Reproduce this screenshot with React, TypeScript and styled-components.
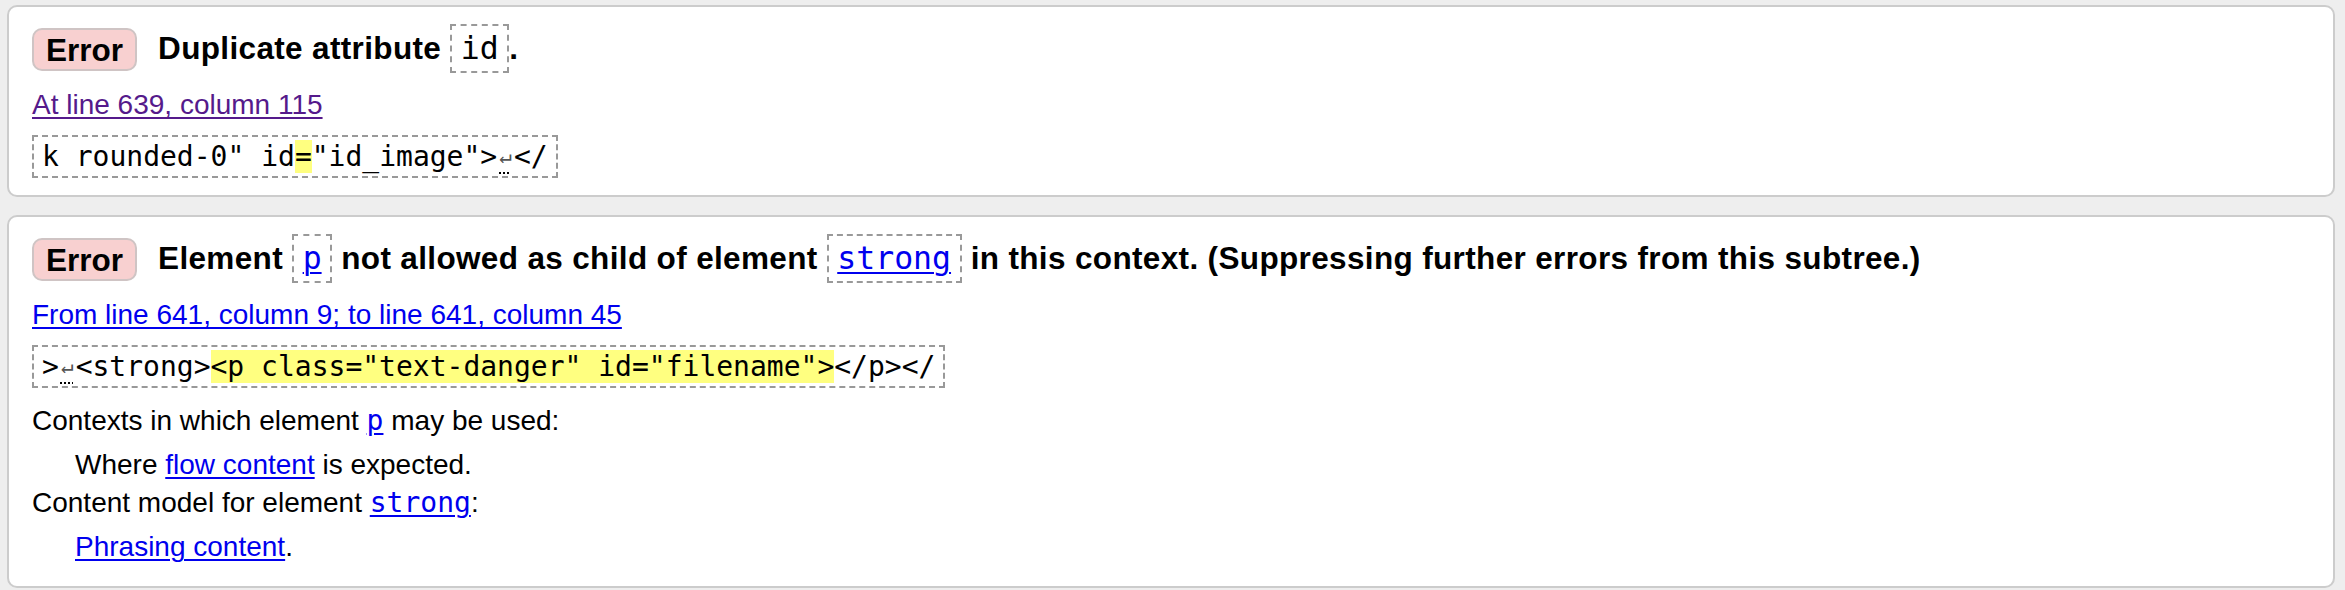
import React from "react"
import styled, { createGlobalStyle } from "styled-components"

const GlobalStyle = createGlobalStyle`
  html, body {
    margin: 0;
    padding: 0;
    background: #eeeeee;
  }
  body {
    font-family: "Liberation Sans", Arial, sans-serif;
    font-size: 28px;
    line-height: 38px;
    color: #000;
  }
`

const Page = styled.div`
  padding: 5px 10px 6px 7px;
`

const Card = styled.section`
  background: #fff;
  border: 2px solid #cccccc;
  border-radius: 10px;
  padding: 17px 23px 17px 23px;
  & + & {
    margin-top: 18px;
  }
`

const HeadingRow = styled.div`
  display: flex;
  align-items: center;
  gap: 21px;
`

const Badge = styled.span`
  display: inline-flex;
  align-items: center;
  height: 43px;
  box-sizing: border-box;
  padding: 0 12px;
  background: #f8d0d0;
  border: 2px solid #cfc4c4;
  border-radius: 10px;
  font-weight: bold;
  font-size: 31.5px;
`

const Title = styled.h2`
  margin: 0;
  font-size: 31.5px;
  font-weight: bold;
  line-height: 49px;
  letter-spacing: 0.35px;
`

const InlineCode = styled.code`
  display: inline-block;
  vertical-align: middle;
  box-sizing: border-box;
  height: 49px;
  padding: 0 8.5px;
  border: 2px dashed #999999;
  font-family: "DejaVu Sans Mono", "Liberation Mono", monospace;
  font-size: 31.5px;
  font-weight: normal;
  letter-spacing: 0;
  line-height: 45px;
  position: relative;
  top: -2px;
`

const Link = styled.a<{ $visited?: boolean }>`
  color: ${({ $visited }) => ($visited ? "#551a8b" : "#0000ee")};
  text-decoration: underline;
  text-decoration-thickness: 2px;
  text-underline-offset: 3px;
`

const Location = styled.div`
  margin-top: 11px;
  line-height: 38px;
`

const Extract = styled.div`
  display: inline-block;
  margin-top: 11px;
  box-sizing: border-box;
  height: 43px;
  padding: 0 8px;
  border: 2px dashed #999999;
  font-family: "DejaVu Sans Mono", "Liberation Mono", monospace;
  font-size: 28px;
  line-height: 39px;
  white-space: pre;
`

const Mark = styled.mark`
  background: #ffff80;
  color: inherit;
`

const LineFeed = styled.abbr`
  display: inline-block;
  width: 0.8em;
  font-size: 0.75em;
  line-height: 1;
  vertical-align: 3px;
  text-align: center;
  color: #555;
  text-decoration: underline dotted #000;
  text-decoration-thickness: 2px;
  text-underline-offset: 9px;
`

const Wrap = styled.div`
  display: block;
`

const Details = styled.dl`
  margin: 14px 0 3px 0;
  line-height: 38px;
`

const Term = styled.dt`
  margin: 0;
`

const Desc = styled.dd`
  margin: 6px 0 0 43px;
`

const Mono = styled.code`
  font-family: "DejaVu Sans Mono", "Liberation Mono", monospace;
  font-size: 28px;
`

const LF = () => <LineFeed title="Line break">↵</LineFeed>

export default function App() {
  return (
    <Page>
      <GlobalStyle />
      <Card>
        <HeadingRow>
          <Badge>Error</Badge>
          <Title>
            Duplicate attribute <InlineCode>id</InlineCode>.
          </Title>
        </HeadingRow>
        <Location>
          <Link href="#l639c115" $visited>At line 639, column 115</Link>
        </Location>
        <Wrap>
          <Extract>
            {'k rounded-0" id'}<Mark>=</Mark>{'"id_image">'}<LF />{"</"}
          </Extract>
        </Wrap>
      </Card>
      <Card>
        <HeadingRow>
          <Badge>Error</Badge>
          <Title>
            Element <InlineCode><Link href="#p">p</Link></InlineCode> not allowed as child of element{" "}
            <InlineCode><Link href="#strong">strong</Link></InlineCode> in this context. (Suppressing further errors from this subtree.)
          </Title>
        </HeadingRow>
        <Location>
          <Link href="#l641c9">From line 641, column 9; to line 641, column 45</Link>
        </Location>
        <Wrap>
          <Extract>
            {">"}<LF />{"<strong>"}<Mark>{'<p class="text-danger" id="filename">'}</Mark>{"</p></"}
          </Extract>
        </Wrap>
        <Details>
          <Term>
            Contexts in which element <Link href="#p"><Mono>p</Mono></Link> may be used:
          </Term>
          <Desc>
            Where <Link href="#flow">flow content</Link> is expected.
          </Desc>
          <Term>
            Content model for element <Link href="#strong"><Mono>strong</Mono></Link>:
          </Term>
          <Desc>
            <Link href="#phrasing">Phrasing content</Link>.
          </Desc>
        </Details>
      </Card>
    </Page>
  )
}
